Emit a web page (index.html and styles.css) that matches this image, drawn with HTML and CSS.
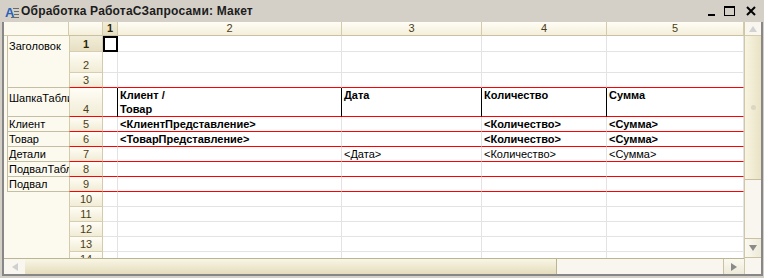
FILE: index.html
```html
<!DOCTYPE html>
<html lang="ru">
<head>
  <meta charset="UTF-8" />
  <title>Обработка РаботаСЗапросами: Макет</title>
  <link rel="stylesheet" href="styles.css">
</head>
<body>
<div class="window">

  <div class="titlebar">
    <svg class="app-icon" width="14" height="15" viewBox="0 0 14 15">
      <rect x="8" y="4" width="6" height="1" fill="#6a6a6a"/>
      <rect x="9" y="7" width="5" height="1" fill="#6a6a6a"/>
      <rect x="9" y="10" width="5" height="1" fill="#6a6a6a"/>
      <rect x="6" y="13" width="8" height="1" fill="#6a6a6a"/>
      <text x="0" y="13" font-family="Liberation Sans" font-size="13" font-weight="bold" fill="#2a62b8">A</text>
    </svg>
    <span class="title">Обработка РаботаСЗапросами: Макет</span>
    <div class="win-buttons">
      <svg class="wb" width="16" height="14" viewBox="0 0 16 14"><rect x="4" y="10" width="7" height="2" fill="#000"/></svg>
      <svg class="wb" width="16" height="14" viewBox="0 0 16 14"><rect x="3.5" y="2.5" width="10" height="9" fill="none" stroke="#000"/><rect x="3" y="2" width="11" height="2" fill="#000"/></svg>
      <svg class="wb close" width="16" height="14" viewBox="0 0 16 14"><path d="M4 3 L12 11 M12 3 L4 11" stroke="#000" stroke-width="2"/></svg>
    </div>
  </div>

  <div class="frame">
    <div class="sheet">

      <div class="colhead">
        <div class="ch-corner"></div>
        <div class="ch"></div>
        <div class="ch sel">1</div>
        <div class="ch">2</div>
        <div class="ch">3</div>
        <div class="ch">4</div>
        <div class="ch">5</div>
      </div>

      <div class="body">
        <div class="row">
          <div class="grp tall span3">Заголовок</div>
          <div class="rh sel">1</div>
          <div class="c sel"></div><div class="c"></div><div class="c"></div><div class="c"></div><div class="c"></div>
        </div>
        <div class="row">
          <div class="rh">2</div>
          <div class="c"></div><div class="c"></div><div class="c"></div><div class="c"></div><div class="c"></div>
        </div>
        <div class="row red">
          <div class="rh">3</div>
          <div class="c"></div><div class="c"></div><div class="c"></div><div class="c"></div><div class="c"></div>
        </div>
        <div class="row red head">
          <div class="grp tall">ШапкаТаблицы</div>
          <div class="rh">4</div>
          <div class="c"></div>
          <div class="c b">Клиент /<br>Товар</div>
          <div class="c b">Дата</div>
          <div class="c b">Количество</div>
          <div class="c b">Сумма</div>
        </div>
        <div class="row red">
          <div class="grp">Клиент</div>
          <div class="rh">5</div>
          <div class="c"></div>
          <div class="c b">&lt;КлиентПредставление&gt;</div>
          <div class="c"></div>
          <div class="c b">&lt;Количество&gt;</div>
          <div class="c b">&lt;Сумма&gt;</div>
        </div>
        <div class="row red">
          <div class="grp">Товар</div>
          <div class="rh">6</div>
          <div class="c"></div>
          <div class="c b">&lt;ТоварПредставление&gt;</div>
          <div class="c"></div>
          <div class="c b">&lt;Количество&gt;</div>
          <div class="c b">&lt;Сумма&gt;</div>
        </div>
        <div class="row red">
          <div class="grp">Детали</div>
          <div class="rh">7</div>
          <div class="c"></div>
          <div class="c"></div>
          <div class="c">&lt;Дата&gt;</div>
          <div class="c">&lt;Количество&gt;</div>
          <div class="c">&lt;Сумма&gt;</div>
        </div>
        <div class="row red">
          <div class="grp">ПодвалТаблицы</div>
          <div class="rh">8</div>
          <div class="c"></div><div class="c"></div><div class="c"></div><div class="c"></div><div class="c"></div>
        </div>
        <div class="row red">
          <div class="grp">Подвал</div>
          <div class="rh">9</div>
          <div class="c"></div><div class="c"></div><div class="c"></div><div class="c"></div><div class="c"></div>
        </div>
        <div class="row">
          <div class="margin"></div>
          <div class="rh">10</div>
          <div class="c"></div><div class="c"></div><div class="c"></div><div class="c"></div><div class="c"></div>
        </div>
        <div class="row">
          <div class="margin"></div>
          <div class="rh">11</div>
          <div class="c"></div><div class="c"></div><div class="c"></div><div class="c"></div><div class="c"></div>
        </div>
        <div class="row">
          <div class="margin"></div>
          <div class="rh">12</div>
          <div class="c"></div><div class="c"></div><div class="c"></div><div class="c"></div><div class="c"></div>
        </div>
        <div class="row">
          <div class="margin"></div>
          <div class="rh">13</div>
          <div class="c"></div><div class="c"></div><div class="c"></div><div class="c"></div><div class="c"></div>
        </div>
        <div class="row">
          <div class="margin"></div>
          <div class="rh">14</div>
          <div class="c"></div><div class="c"></div><div class="c"></div><div class="c"></div><div class="c"></div>
        </div>
      </div>

      <div class="hscroll">
        <div class="hs-btn">
          <svg width="6" height="8" viewBox="0 0 6 8"><path d="M6 0 L0 4 L6 8 Z" fill="#cfcfcf"/></svg>
        </div>
        <div class="hs-thumb"></div>
        <div class="hs-track"></div>
        <div class="hs-btn right">
          <svg width="6" height="8" viewBox="0 0 6 8"><path d="M0 0 L6 4 L0 8 Z" fill="#8a8a8a"/></svg>
        </div>
      </div>
    </div>

    <div class="vscroll">
      <div class="vs-up">
        <svg width="8" height="6" viewBox="0 0 8 6"><path d="M0 6 L4 0 L8 6 Z" fill="#d2d2d2"/></svg>
      </div>
      <div class="vs-thumb"><span class="grip"></span></div>
      <div class="vs-track"></div>
      <div class="vs-down">
        <svg width="8" height="6" viewBox="0 0 8 6"><path d="M0 0 L8 0 L4 6 Z" fill="#8a8a8a"/></svg>
      </div>
      <div class="corner"></div>
    </div>
  </div>

</div>
</body>
</html>
```

FILE: styles.css
```css
* {
  box-sizing: border-box;
}
body {
  margin: 0;
  font-family: "Liberation Sans", Arial, sans-serif;
  font-size: 11px;
  color: #000;
}
.window {
  width: 764px;
  height: 278px;
  background: #d4d0c8;
  padding: 0 1px 2px 2px;
  display: flex;
  flex-direction: column;
}

/* title bar */
.titlebar {
  flex: none;
  height: 22px;
  display: flex;
  align-items: center;
  padding-left: 3px;
}
.app-icon {
  display: block;
}
.title {
  margin-left: 2px;
  font-size: 12px;
  font-weight: bold;
  letter-spacing: 0.2px;
  color: #1c1c1c;
}
.win-buttons {
  margin-left: auto;
  margin-right: 4px;
  display: flex;
  gap: 1px;
}
.wb {
  display: block;
}
.wb.close {
  margin-left: 5px;
}

/* frame */
.frame {
  flex: 1;
  display: flex;
  border-style: solid;
  border-color: #878787;
  border-width: 0 2px 2px 2px;
  background: #fcfaef;
}
.sheet {
  width: 740px;
  display: flex;
  flex-direction: column;
}

/* column header */
.colhead {
  height: 14px;
  display: grid;
  grid-template-columns: 65px 34px 15px 224px 140px 125px 137px;
}
.ch-corner {
  background: #fcfaef;
  border-bottom: 1px solid #d3cbab;
  border-right: 1px solid #d3cbab;
}
.ch {
  background: linear-gradient(#fffdf6, #f4efda);
  border-right: 1px solid #d3cbab;
  border-bottom: 1px solid #c9c1a1;
  text-align: center;
  line-height: 13px;
  color: #4b3e17;
}
.ch.sel {
  background: linear-gradient(#f2edd8, #e6dfc3);
  font-weight: bold;
  color: #2e2508;
}

/* sheet body */
.body {
  height: 222px;
  overflow: hidden;
  display: grid;
  grid-template-columns: 65px 34px 15px 224px 140px 125px 137px;
  grid-template-rows: 16px 21px 15px 29px repeat(10, 15px);
  background: #fcfaef;
}
.row {
  display: contents;
}
.grp {
  margin-left: 3px;
  padding-left: 1px;
  border-left: 1px solid #c4bea4;
  border-bottom: 1px solid #c4bea4;
  line-height: 15px;
  white-space: nowrap;
  overflow: hidden;
}
.grp.tall {
  padding-top: 3px;
}
.grp.span3 {
  grid-row: span 3;
}
.rh {
  display: flex;
  align-items: flex-end;
  justify-content: center;
  line-height: 14px;
  background: linear-gradient(#fffdf6, #f1ecd5);
  border-left: 1px solid #d3cbab;
  border-right: 1px solid #d3cbab;
  border-bottom: 1px solid #d6ceae;
  color: #4b3e17;
}
.rh.sel {
  background: linear-gradient(#f2edd8, #e6dfc3);
  font-weight: bold;
  color: #2e2508;
}
.c {
  background: #fff;
  border-right: 1px solid #e3e3e3;
  border-bottom: 1px solid #e3e3e3;
  padding: 0 2px;
  line-height: 14px;
  white-space: nowrap;
  overflow: hidden;
}
.c.sel {
  outline: 2px solid #000;
  outline-offset: -2px;
}
.c.b {
  font-weight: bold;
}
.row.red > .rh,
.row.red > .c {
  border-bottom-color: #f00;
}
.row.head > .c:not(:last-child) {
  border-right-color: #000;
}

/* horizontal scrollbar */
.hscroll {
  height: 16px;
  display: flex;
  border-top: 1px solid #bcb592;
}
.hs-btn {
  width: 21px;
  background: #f8f6ee;
  display: flex;
  align-items: center;
  justify-content: center;
}
.hs-btn.right {
  border-left: 1px solid #c9c2a2;
  background: linear-gradient(#fbf9f0, #eeead8);
}
.hs-thumb {
  width: 532px;
  background: linear-gradient(#f9f6e6, #e4dcbb);
  border-right: 1px solid #bcb592;
}
.hs-track {
  flex: 1;
  background: #f8f6ee;
}

/* vertical scrollbar */
.vscroll {
  width: 17px;
  display: flex;
  flex-direction: column;
  border-left: 1px solid #cfc8a8;
}
.vs-up {
  height: 14px;
  background: #f8f6ee;
  border-bottom: 1px solid #d3cbab;
  display: flex;
  align-items: center;
  justify-content: center;
}
.vs-thumb {
  height: 144px;
  background: linear-gradient(90deg, #f8f4e0, #e9e2c5);
  border-bottom: 1px solid #c6be9e;
  display: flex;
  align-items: center;
  justify-content: center;
}
.grip {
  width: 5px;
  height: 5px;
  border-radius: 50%;
  background: #dcd6c2;
}
.vs-track {
  height: 58px;
  background: #f8f6ee;
}
.vs-down {
  height: 20px;
  background: linear-gradient(90deg, #fbf9f0, #eeead8);
  border-top: 1px solid #c9c2a2;
  border-bottom: 1px solid #c9c2a2;
  display: flex;
  align-items: center;
  justify-content: center;
}
.corner {
  height: 16px;
  background: #f8f6ee;
}
```
